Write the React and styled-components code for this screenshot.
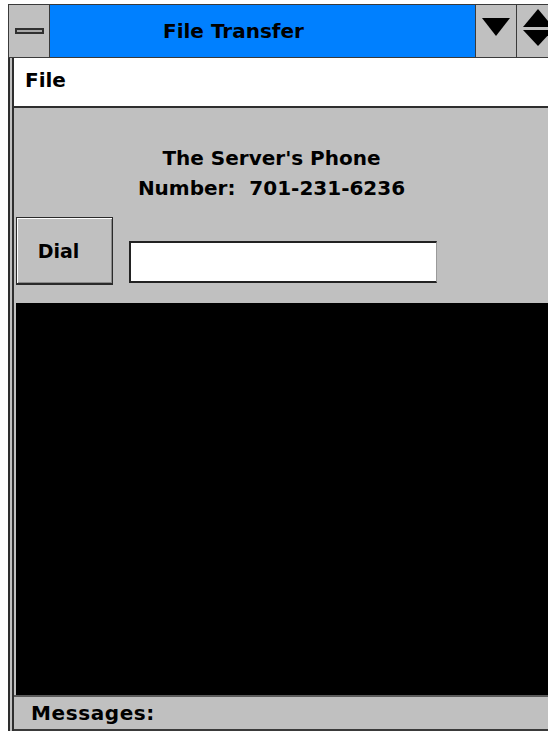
import React from 'react';
import styled, { createGlobalStyle } from 'styled-components';

const GlobalStyle = createGlobalStyle`
  html, body {
    margin: 0;
    padding: 0;
    background: #ffffff;
    overflow: hidden;
  }
  body {
    font-family: "DejaVu Sans", "Liberation Sans", sans-serif;
  }
`;

const Window = styled.div`
  margin: 4px 0 0 8px;
  width: 551px;
  height: 727px;
  display: flex;
  flex-direction: column;
  background: #c0c0c0;
`;

const TitleBar = styled.div`
  display: flex;
  height: 52px;
  border: 1px solid #3a3a3a;
  flex-shrink: 0;
`;

const TitleButton = styled.div`
  width: 41px;
  display: flex;
  align-items: ${p => (p.raised ? 'flex-start' : 'center')};
  justify-content: center;
  padding-top: ${p => (p.raised ? `${p.raised}px` : '0')};
  box-sizing: border-box;
  background: #c0c0c0;
  border-right: ${p => (p.last ? 'none' : '1px solid #3a3a3a')};
`;

const MinimizeBar = styled.span`
  display: block;
  width: 29px;
  height: 6px;
  box-sizing: border-box;
  border: 2px solid #303030;
  background: #a8a8a8;
`;

const Title = styled.div`
  flex: 1;
  background: #0080ff;
  border-right: 1px solid #3a3a3a;
  display: flex;
  align-items: center;
  justify-content: center;
  padding-right: 58px;
  font-size: 20px;
  font-weight: bold;
  color: #000;
`;

const Frame = styled.div`
  flex: 1;
  display: flex;
  flex-direction: column;
  border-left: 2px solid #2e2e2e;
  padding-left: 2px;
  background: #c0c0c0;
`;

const Client = styled.div`
  flex: 1;
  display: flex;
  flex-direction: column;
  border-left: 2px solid #2e2e2e;
  background: #c0c0c0;
`;

const MenuBar = styled.div`
  height: 50px;
  background: #ffffff;
  border-bottom: 2px solid #2e2e2e;
  display: flex;
  align-items: flex-start;
  padding: 10px 0 0 11px;
  box-sizing: border-box;
  font-size: 20px;
  font-weight: bold;
  flex-shrink: 0;
`;

const Content = styled.div`
  flex: 1;
  display: flex;
  flex-direction: column;
`;

const PhoneInfo = styled.div`
  padding: 35px 30px 0 0;
  text-align: center;
  font-size: 20px;
  font-weight: bold;
  line-height: 30px;
  color: #000;
`;

const DialRow = styled.div`
  display: flex;
  align-items: flex-end;
  gap: 16px;
  margin: 14px 0 0 2px;
`;

const DialButton = styled.button`
  width: 97px;
  height: 68px;
  box-sizing: border-box;
  background: #c0c0c0;
  border: 1px solid #2a2a2a;
  border-bottom-width: 2px;
  box-shadow: inset 1px 1px #ffffff, inset -1px -1px #8a8a8a;
  font-family: "DejaVu Sans", "Liberation Sans", sans-serif;
  font-size: 19px;
  font-weight: bold;
  color: #000;
  padding: 0 12px 0 0;
`;

const NumberField = styled.input`
  width: 308px;
  height: 42px;
  box-sizing: border-box;
  margin-bottom: 2px;
  background: #ffffff;
  border: 2px solid #222;
  border-right: 1px solid #9a9a9a;
  outline: none;
`;

const Terminal = styled.div`
  flex: 1;
  margin: 18px 0 0 2px;
  background: #000000;
`;

const StatusBar = styled.div`
  height: 32px;
  flex-shrink: 0;
  border-top: 2px solid #5a5a5a;
  border-bottom: 2px solid #3a3a3a;
  display: flex;
  align-items: center;
  padding-left: 17px;
  font-size: 20px;
  font-weight: bold;
  letter-spacing: 0.6px;
  color: #000;
`;

const DownArrow = () => (
  <svg width="28" height="18" viewBox="0 0 28 18">
    <polygon points="0,0 28,0 14,18" fill="#000" />
  </svg>
);

const UpDownArrow = () => (
  <svg width="30" height="38" viewBox="0 0 30 38">
    <polygon points="0,18 15,0 30,18" fill="#000" />
    <polygon points="0,21 30,21 15,37" fill="#000" />
  </svg>
);

export default function App() {
  return (
    <>
      <GlobalStyle />
      <Window>
        <TitleBar>
          <TitleButton>
            <MinimizeBar />
          </TitleButton>
          <Title>File Transfer</Title>
          <TitleButton raised={13}>
            <DownArrow />
          </TitleButton>
          <TitleButton raised={4} last>
            <UpDownArrow />
          </TitleButton>
        </TitleBar>
        <Frame>
          <Client>
            <MenuBar>File</MenuBar>
            <Content>
              <PhoneInfo>
                The Server's Phone
                <br />
                Number:&nbsp; 701-231-6236
              </PhoneInfo>
              <DialRow>
                <DialButton>Dial</DialButton>
                <NumberField type="text" />
              </DialRow>
              <Terminal />
              <StatusBar>Messages:</StatusBar>
            </Content>
          </Client>
        </Frame>
      </Window>
    </>
  );
}
